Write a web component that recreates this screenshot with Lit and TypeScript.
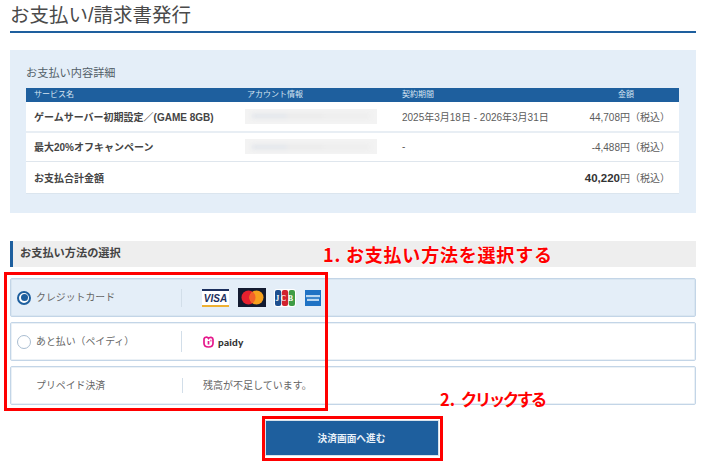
import { LitElement, html, css } from "lit";
import { customElement } from "lit/decorators.js";

@customElement("app-root")
export class AppRoot extends LitElement {
  static styles = css`
    :host {
      display: block;
      position: relative;
      width: 710px;
      height: 467px;
      overflow: hidden;
      background: #fff;
      color: #5c5c5c;
      font-family: "Liberation Sans", "Noto Sans CJK JP", sans-serif;
      font-size: 10px;
    }
    .page { padding: 0 14px 0 10px; display: flex; flex-direction: column; }
    h1 {
      margin: 0;
      height: 31px;
      line-height: 30px;
      font-size: 19.5px;
      font-weight: 400;
      color: #4a4a4a;
      border-bottom: 2px solid #1e5f9e;
      white-space: nowrap;
    }
    .panel {
      margin-top: 17px;
      height: 163px;
      box-sizing: border-box;
      background: #e4eef8;
      padding: 15px 17px 0 16px;
    }
    .panel h2 {
      margin: 0 0 7px;
      font-size: 11.2px;
      font-weight: 400;
      line-height: 16px;
      color: #525e68;
    }
    .tbl { background: #e8eef4; }
    .tr {
      display: grid;
      grid-template-columns: 221px 155px 171px 106px;
      align-items: center;
      background: #fff;
    }
    .th {
      height: 14px;
      background: #1e5f9e;
      color: #d5e4f2;
      font-size: 8px;
      line-height: 14px;
    }
    .th .amt { text-align: center; padding: 0; }
    .r1 { height: 29px; margin-bottom: 2px; padding-bottom: 1px; box-sizing: border-box; }
    .r2 { height: 27px; padding-bottom: 1px; border-bottom: 1px solid #dfe6ed; }
    .r3 { height: 31px; box-shadow: 0 1px 0 #dbe5ee; }
    .name { padding-left: 8px; font-weight: 700; color: #444; white-space: nowrap; }
    .th .name { font-weight: 400; color: #d5e4f2; }
    .amt { text-align: right; padding-right: 9px; white-space: nowrap; }
    .th .amt { padding-right: 0; }
    .amt b { color: #333; font-size: 11.5px; }
    .blur {
      display: flex;
      align-items: center;
      justify-content: center;
      width: 132px;
      height: 15px;
      margin-left: -2px;
      background: #f3f3f3;
    }
    .blur::after {
      content: "";
      width: 118px;
      height: 4px;
      background: linear-gradient(90deg, #dfe3e9 0 30%, #e8e8e8 30% 60%, #ececec 60% 100%);
      filter: blur(2px);
    }
    .period { white-space: nowrap; }
    .sec {
      margin-top: 28px;
      height: 26px;
      box-sizing: border-box;
      background: #eee;
      border-left: 3px solid #1e5f9e;
      padding-left: 7px;
      line-height: 25px;
      font-size: 11.2px;
      font-weight: 700;
      color: #444;
    }
    .opts { margin-top: 11px; display: flex; flex-direction: column; gap: 5px; }
    .opt {
      height: 39px;
      box-sizing: border-box;
      border: 1px solid #c3d5e7;
      border-radius: 2px;
      box-shadow: inset 0 0 0 1px rgba(197, 214, 230, .35);
      display: flex;
      align-items: center;
      background: #fff;
    }
    .opt.on { background: #e4eef8; }
    .radio {
      flex: none;
      width: 14px;
      height: 14px;
      box-sizing: border-box;
      margin-left: 6px;
      border-radius: 50%;
      border: 1.5px solid #a9bdd1;
      background: #fff;
      display: flex;
      align-items: center;
      justify-content: center;
    }
    .opt.on .radio { border: 2px solid #1e5f9e; }
    .opt.on .radio::after {
      content: "";
      width: 7px;
      height: 7px;
      border-radius: 50%;
      background: #1e5f9e;
    }
    .spacer { flex: none; width: 20px; margin-left: 5px; }
    .lab { flex: none; width: 145px; margin-left: 5px; padding-bottom: 2px; white-space: nowrap; color: #666; font-size: 9.9px; }
    .lab.plain { width: 146px; margin-left: 0; }
    .div { flex: none; width: 1px; height: 18px; background: #d2dee9; margin-right: 20px; }
    .div.tall { height: 21px; margin-right: 21px; }
    .div.short { height: 15px; margin-right: 20px; }
    .icons { display: flex; align-items: center; gap: 9px; }
    .icons svg { display: block; }
    .icons .jcb { margin-left: -1px; }
    .paidy { display: flex; align-items: center; gap: 4px; }
    .paidy span { font-family: Lato, sans-serif; font-weight: 900; font-size: 10px; letter-spacing: .2px; color: #333; }
    .msg { color: #666; font-size: 10px; white-space: nowrap; padding-bottom: 2px; }
    .actions { margin-top: 16px; display: flex; justify-content: center; padding-right: 3px; }
    .btn {
      width: 172px;
      height: 34px;
      box-sizing: border-box;
      background: #1e5f9e;
      color: #e8f0f8;
      font-weight: 700;
      font-size: 9.7px;
      display: flex;
      align-items: center;
      justify-content: center;
      box-shadow: 0 0 0 1px #d8e2ec;
    }
    .box { position: absolute; box-sizing: border-box; border: 3px solid #f00; }
    .box.a { left: 4px; top: 272px; width: 324px; height: 139px; }
    .box.b { left: 262px; top: 416px; width: 181px; height: 45px; }
    .note {
      position: absolute;
      color: #f00;
      font-weight: 700;
      white-space: nowrap;
      font-family: "Noto Sans CJK JP", sans-serif;
      text-shadow: 0 0 2px #fff;
    }
    .note.one { left: 323px; top: 241px; font-size: 18px; line-height: 26px; letter-spacing: .8px; }
    .note.two { left: 440px; top: 386px; font-size: 16.5px; line-height: 26px; letter-spacing: -2.5px; word-spacing: 4.5px; }
    .note.two span { letter-spacing: 0; }
  `;

  render() {
    return html`
      <div class="page">
        <h1>お支払い/請求書発行</h1>
        <section class="panel">
          <h2>お支払い内容詳細</h2>
          <div class="tbl">
            <div class="tr th">
              <div class="name">サービス名</div><div>アカウント情報</div><div>契約期間</div><div class="amt">金額</div>
            </div>
            <div class="tr r1">
              <div class="name">ゲームサーバー初期設定／(GAME 8GB)</div>
              <div><span class="blur"></span></div>
              <div class="period">2025年3月18日 - 2026年3月31日</div>
              <div class="amt">44,708円（税込）</div>
            </div>
            <div class="tr r2">
              <div class="name">最大20%オフキャンペーン</div>
              <div><span class="blur"></span></div>
              <div class="period">-</div>
              <div class="amt">-4,488円（税込）</div>
            </div>
            <div class="tr r3">
              <div class="name">お支払合計金額</div><div></div><div></div>
              <div class="amt"><b>40,220</b>円（税込）</div>
            </div>
          </div>
        </section>
        <div class="sec">お支払い方法の選択</div>
        <div class="opts">
          <div class="opt on">
            <span class="radio"></span>
            <span class="lab">クレジットカード</span>
            <span class="div"></span>
            <div class="icons">
              <svg width="27" height="18" viewBox="0 0 27 18">
                <rect width="27" height="18" fill="#fff"/>
                <rect width="27" height="2" fill="#1b2f5e"/>
                <rect y="16" width="27" height="2" fill="#eeb133"/>
                <text x="13.5" y="13" text-anchor="middle" font-family="Liberation Sans" font-weight="700" font-style="italic" font-size="10" fill="#1b2f5e">VISA</text>
              </svg>
              <svg width="28" height="19" viewBox="0 0 28 19">
                <rect width="28" height="19" fill="#121a30"/>
                <circle cx="10.5" cy="9.5" r="7" fill="#e5202e"/>
                <circle cx="18.5" cy="9.5" r="7" fill="#f7a11d"/>
                <path d="M14.5 3.75a7 7 0 0 1 0 11.5a7 7 0 0 1 0-11.5z" fill="#f3622a"/>
              </svg>
              <svg class="jcb" width="22" height="18" viewBox="0 0 22 18">
                <rect width="22" height="18" rx="3" fill="#fff"/>
                <rect x="1" y="1" width="6.2" height="16" rx="2" fill="#1d4f8f"/>
                <rect x="7.9" y="1" width="6.2" height="16" rx="2" fill="#d1232f"/>
                <rect x="14.8" y="1" width="6.2" height="16" rx="2" fill="#3f9c46"/>
                <text x="11" y="12" text-anchor="middle" font-family="Liberation Serif" font-weight="700" font-size="7.5" letter-spacing="1.6" fill="#fff">JCB</text>
              </svg>
              <svg width="16" height="16" viewBox="0 0 16 16">
                <rect width="16" height="16" fill="#1f72c4"/>
                <rect x="1" y="5" width="14" height="2.2" fill="#b9d6f0"/>
                <rect x="2" y="8.8" width="12" height="2.2" fill="#b9d6f0"/>
              </svg>
            </div>
          </div>
          <div class="opt">
            <span class="radio"></span>
            <span class="lab">あと払い（ペイディ）</span>
            <span class="div tall"></span>
            <div class="paidy">
              <svg width="11" height="12" viewBox="0 0 11 12" fill="none" stroke="#e5178b" stroke-width="1.7">
                <path d="M5.5 2.4C4.6 .7 1 .7 1 3.5v3.7C1 9.7 3 11 5.5 11S10 9.7 10 7.2V3.5C10 .9 6.6 .7 5.5 2.4z"/>
                <path d="M5.5 5v3.6M7.4 4.6h1"/>
              </svg>
              <span>paidy</span>
            </div>
          </div>
          <div class="opt">
            <span class="spacer"></span>
            <span class="lab plain">プリペイド決済</span>
            <span class="div short"></span>
            <span class="msg">残高が不足しています。</span>
          </div>
        </div>
        <div class="actions"><div class="btn">決済画面へ進む</div></div>
      </div>
      <div class="box a"></div>
      <div class="box b"></div>
      <div class="note one">1. お支払い方法を選択する</div>
      <div class="note two"><span>2.</span> クリックする</div>
    `;
  }
}
